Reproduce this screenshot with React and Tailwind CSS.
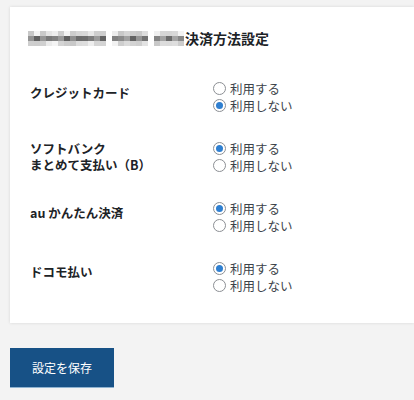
import React from "react";

const FONT = { fontFamily: '"Noto Sans CJK JP", "Noto Sans", sans-serif' };

const methods = [
  { label: ["クレジットカード"], value: "off", pad: "pt-[5px]" },
  { label: ["ソフトバンク", "まとめて支払い（B）"], value: "on", pad: "pt-[1px]" },
  { label: ["au かんたん決済"], value: "on", pad: "pt-[5px]" },
  { label: ["ドコモ払い"], value: "on", pad: "pt-[4px]" },
];

// pixelated (mosaic) shop name in front of the title
const Mosaic = () => {
  const cols = 26;
  const rows = 3;
  const gaps = [13, 20];
  const cells = [];
  for (let r = 0; r < rows; r++) {
    for (let c = 0; c < cols; c++) {
      if (gaps.includes(c)) continue;
      const n = (c * 37 + r * 53 + ((c * c) % 11) * 7) % 100;
      let shade;
      if (r === 1) shade = 95 + (n % 95);
      else shade = 200 + (n % 45);
      cells.push(
        <rect key={`${r}-${c}`} x={c * 6} y={r * 5} width={6} height={5} fill={`rgb(${shade},${shade},${shade})`} />
      );
    }
  }
  return (
    <svg width={156} height={15} viewBox="0 0 156 15" className="block">
      {cells}
    </svg>
  );
};

const Radio = ({ checked, children }) => (
  <label className="flex items-center gap-[4px] h-[17px] text-[12px] text-[#3c434a] leading-[17px]">
    <span className="flex h-[13px] w-[13px] shrink-0 items-center justify-center rounded-full border border-[#8c8f94] bg-white">
      {checked && <span className="h-[7px] w-[7px] rounded-full bg-[#2f7fd0]" />}
    </span>
    <span className="text-[12.5px]">{children}</span>
  </label>
);

export default function App() {
  return (
    <div className="min-h-[400px] bg-[#f3f3f3] pt-[7px] pl-[10px] pb-[12px]" style={FONT}>
      <div className="bg-white shadow-[0_0_3px_rgba(0,0,0,0.12)] pl-[20px] pt-[21px] pb-[29px]">
        <h2 className="flex items-center h-[20px] -ml-[2px] text-[14px] font-bold text-[#1d2327]">
          <Mosaic />
          <span className="ml-[1px]">決済方法設定</span>
        </h2>

        <div className="mt-[32px] flex flex-col gap-[26px]">
          {methods.map((m, i) => (
            <div key={i} className="grid grid-cols-[183px_1fr] h-[34px]">
              <div className={`${m.pad} text-[12.5px] font-bold leading-[16px] text-[#1d2327]`}>
                {m.label.map((l) => (
                  <div key={l}>{l}</div>
                ))}
              </div>
              <div className="flex flex-col">
                <Radio checked={m.value === "on"}>利用する</Radio>
                <Radio checked={m.value === "off"}>利用しない</Radio>
              </div>
            </div>
          ))}
        </div>
      </div>

      <button className="block mt-[25px] h-[40px] w-[104px] bg-[#175186] border-b border-[#8fb3d1] text-[12px] text-white">
        設定を保存
      </button>
    </div>
  );
}
